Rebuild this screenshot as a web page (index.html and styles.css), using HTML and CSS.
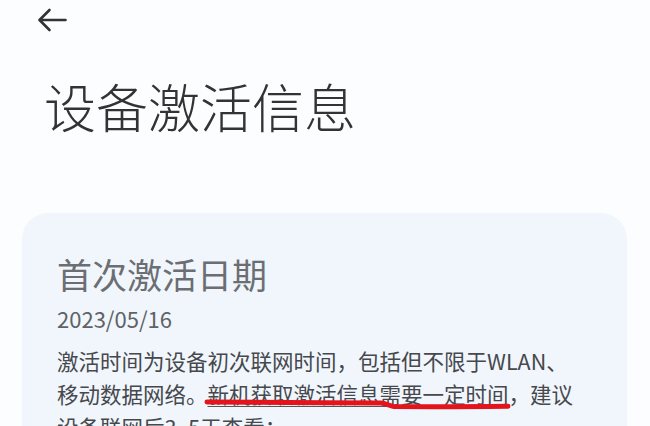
FILE: index.html
```html
<!DOCTYPE html>
<html lang="zh-CN">
<head>
<meta charset="utf-8">
<link rel="stylesheet" href="styles.css">
</head>
<body>
<div class="page">
  <div class="topbar">
    <svg class="back" width="30" height="26" viewBox="0 0 30 26">
      <path d="M28.5 12 H3 M12.5 2 L2.5 12 L12.5 22" fill="none" stroke="#333" stroke-width="2.6" stroke-linecap="round" stroke-linejoin="round"/>
    </svg>
  </div>
  <h1 class="title">设备激活信息</h1>
  <section class="card">
    <h2 class="card-title">首次激活日期</h2>
    <div class="date">2023/05/16</div>
    <p class="desc">激活时间为设备初次联网时间，包括但不限于WLAN、<br>移动数据网络。<span class="ul">新机获取激活信息需要一定时间</span>，建议<br>设备联网后3~5天查看：</p>
    <svg class="mark" width="330" height="20" viewBox="0 0 330 20">
      <path d="M4 6 C60 6.5 120 6.5 178 7 C183 7.2 186 10 191 10.5 C230 10.8 270 10.6 305 10.2" fill="none" stroke="#e3141b" stroke-width="5" stroke-linecap="round" stroke-linejoin="round"/>
    </svg>
  </section>
</div>
</body>
</html>
```

FILE: styles.css
```css
html, body {
  margin: 0;
  padding: 0;
  background: #fcfdfe;
  overflow: hidden;
}
body {
  font-family: "Noto Sans CJK SC", "Noto Sans", sans-serif;
  width: 650px;
  height: 426px;
}
.page {
  display: flex;
  flex-direction: column;
}
.topbar {
  height: 44px;
  padding: 8px 0 0 37px;
  box-sizing: border-box;
}
.back {
  display: block;
}
.title {
  margin: 32px 0 0 44px;
  font-size: 52px;
  line-height: 60px;
  font-weight: 300;
  color: #333;
  letter-spacing: 0;
}
.card {
  position: relative;
  margin: 77px 0 0 22px;
  width: 605px;
  height: 260px;
  box-sizing: border-box;
  padding: 41px 20px 0 35px;
  background: #f0f6fc;
  border-radius: 26px;
}
.card-title {
  margin: 0;
  font-size: 35px;
  line-height: 40px;
  font-weight: 400;
  color: #6b6e72;
}
.date {
  margin-top: 10px;
  font-size: 22px;
  line-height: 28px;
  color: #5f6266;
}
.desc {
  margin: 12px 0 0;
  font-size: 21.5px;
  line-height: 33px;
  color: #46484c;
  white-space: nowrap;
}
.ul {
  text-decoration: underline;
  text-decoration-color: #555;
  text-decoration-thickness: 1px;
  text-underline-offset: 3px;
}
.mark {
  position: absolute;
  left: 181px;
  top: 183px;
}
```
